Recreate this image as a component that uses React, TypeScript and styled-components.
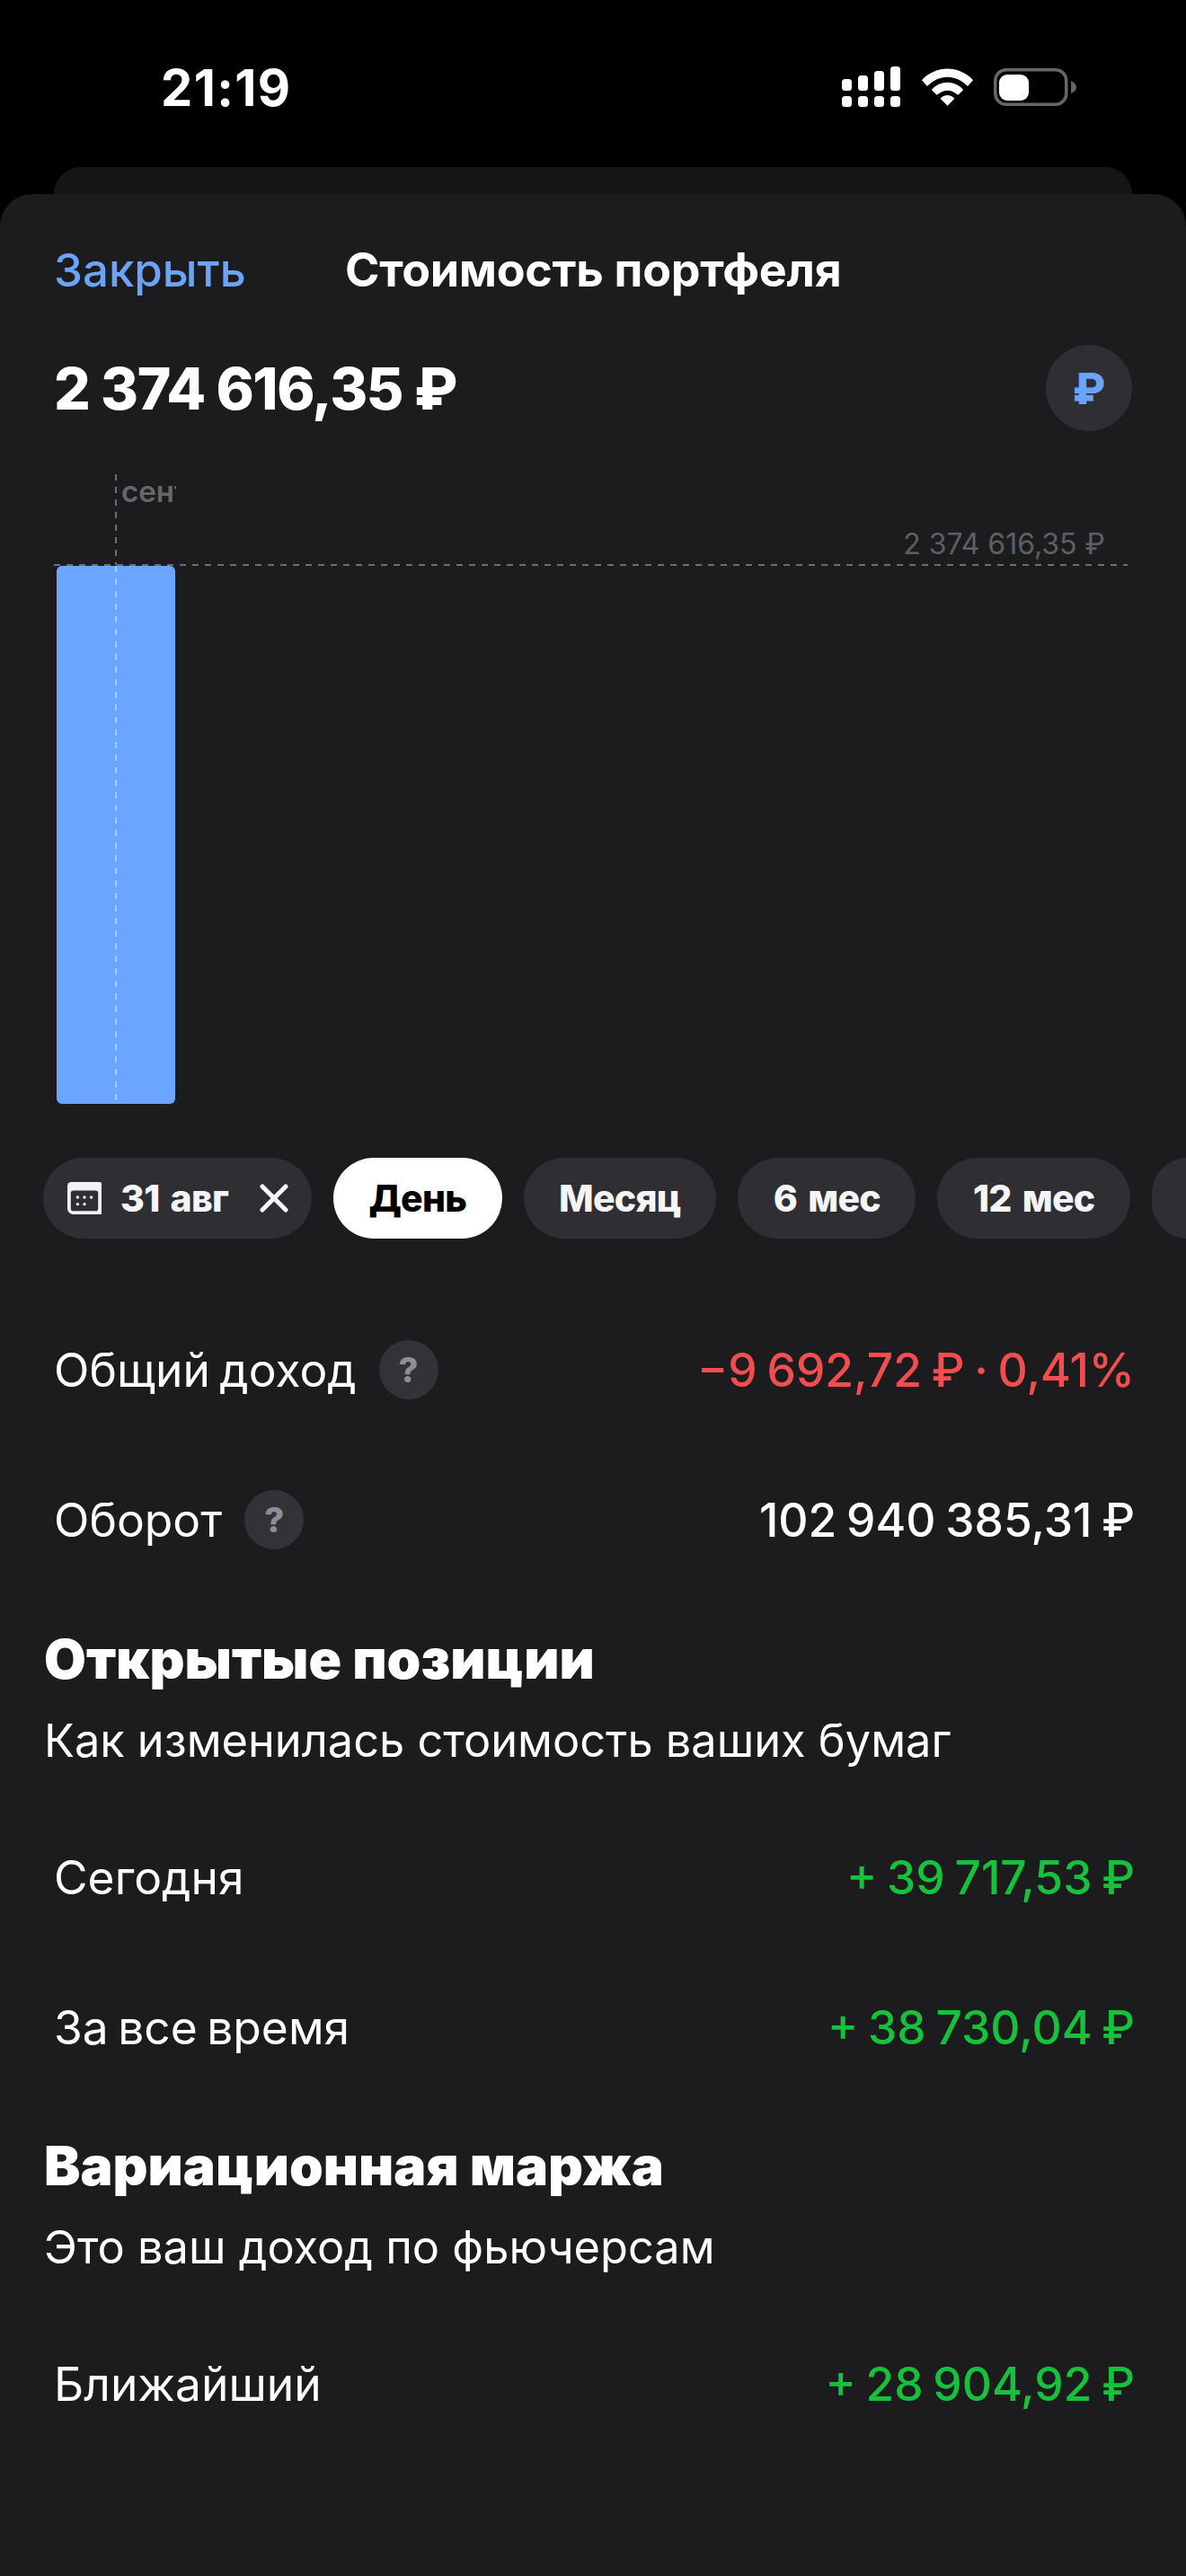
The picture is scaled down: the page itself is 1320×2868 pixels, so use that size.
import React from "react";
import styled, { createGlobalStyle } from "styled-components";

const GlobalStyle = createGlobalStyle`
	html, body {
		margin: 0;
		background: #000;
	}
	* {
		box-sizing: border-box;
	}
`;

const Screen = styled.div`
	width: 1320px;
	height: 2868px;
	overflow: hidden;
	background: #000;
	color: #fff;
	font-family: Inter, "Liberation Sans", sans-serif;
	display: flex;
	flex-direction: column;
`;

const StatusBar = styled.div`
	height: 186px;
	flex: none;
	padding: 70px 122px 0 179px;
	display: flex;
	justify-content: space-between;
	align-items: flex-start;
`;

const Time = styled.div`
	font-size: 56px;
	line-height: 56px;
	font-weight: 700;
	letter-spacing: 1.4px;
`;

const StatusIcons = styled.div`
	display: flex;
	align-items: center;
	gap: 23.5px;
	margin-top: 4px;
`;

const BackCard = styled.div`
	height: 30px;
	flex: none;
	margin: 0 60px;
	background: #161618;
	border-radius: 30px 30px 0 0;
`;

const Sheet = styled.div`
	flex: 1;
	background: #1c1c1e;
	border-radius: 36px 36px 0 0;
	padding-top: 50px;
	overflow: hidden;
`;

const Header = styled.div`
	display: flex;
	align-items: center;
	height: 68px;
	padding-left: 60px;
`;

const CloseLink = styled.span`
	color: #6ba3f8;
	font-size: 51px;
	font-weight: 500;
	width: 324px;
`;

const Title = styled.span`
	font-size: 52px;
	font-weight: 700;
	letter-spacing: -0.3px;
`;

const AmountRow = styled.div`
	display: flex;
	align-items: center;
	justify-content: space-between;
	padding: 0 60px;
	margin-top: 50px;
`;

const Amount = styled.div`
	font-size: 64px;
	font-weight: 800;
	letter-spacing: -1.4px;
`;

const CurrencyButton = styled.div`
	width: 96px;
	height: 96px;
	border-radius: 50%;
	background: #2f2f33;
	color: #6ba3f8;
	font-size: 48px;
	font-weight: 800;
	display: flex;
	align-items: center;
	justify-content: center;
`;

const ChartSvg = styled.svg`
	display: block;
	margin-top: 43px;
`;

const ChipRow = styled.div`
	display: flex;
	gap: 24px;
	padding-left: 48px;
	margin-top: 46px;
	overflow: hidden;
`;

const Chip = styled.div<{ $active?: boolean }>`
	flex: none;
	height: 90px;
	padding: 0 39.5px;
	border-radius: 45px;
	display: flex;
	align-items: center;
	font-size: 41px;
	font-weight: 800;
	letter-spacing: -0.8px;
	word-spacing: 4px;
	background: ${(props) => (props.$active ? "#fff" : "#2f2f33")};
	color: ${(props) => (props.$active ? "#000" : "#f5f5f7")};
`;

const DateChip = styled(Chip)`
	padding: 0 26px;
	gap: 20px;
`;

const ClearIcon = styled.svg`
	margin-left: 15px;
`;

const Row = styled.div`
	display: flex;
	align-items: center;
	justify-content: space-between;
	height: 167px;
	padding: 0 57px 0 60px;
	font-size: 51.5px;
`;

const RowLabel = styled.div`
	display: flex;
	align-items: center;
	gap: 25px;
	word-spacing: -4px;
`;

const RowValue = styled.div<{ $color?: string }>`
	color: ${(props) => props.$color || "#fff"};
	font-weight: 500;
	word-spacing: -3px;
`;

const Help = styled.span`
	width: 66px;
	height: 66px;
	border-radius: 50%;
	background: #333337;
	color: #8e8e93;
	font-size: 38px;
	font-weight: 800;
	display: flex;
	align-items: center;
	justify-content: center;
`;

const Rows = styled.div`
	margin-top: 62px;
`;

const Section = styled.div<{ $top: number }>`
	padding: 0 49px;
	margin-top: ${(props) => props.$top}px;
`;

const SectionTitle = styled.h2`
	margin: 0;
	font-size: 60.5px;
	line-height: 70px;
	font-weight: 900;
`;

const SectionText = styled.p`
	margin: 26px 0 0;
	font-size: 50.5px;
	line-height: 60px;
`;

const RowsTight = styled.div`
	margin-top: 38px;
`;

function Signal() {
	return (
		<svg width="65" height="46" viewBox="0 0 65 46" fill="#fff">
			<rect x="0" y="14" width="11" height="13" rx="3.5" />
			<rect x="18" y="10" width="11" height="17" rx="3.5" />
			<rect x="36" y="5" width="11" height="22" rx="3.5" />
			<rect x="54" y="0" width="11" height="27" rx="3.5" />
			<rect x="0" y="33" width="11" height="12" rx="3.5" />
			<rect x="18" y="33" width="11" height="12" rx="3.5" />
			<rect x="36" y="33" width="11" height="12" rx="3.5" />
			<rect x="54" y="33" width="11" height="12" rx="3.5" />
		</svg>
	);
}

function Wifi() {
	return (
		<svg width="57" height="42" viewBox="0 0 58 42" fill="#fff">
			<path d="M0 13 C16 -4 42 -4 58 13 L52 20 C38 6 20 6 6 20 Z" />
			<path d="M11 24 C21 13 37 13 47 24 L41 30 C33 23 25 23 17 30 Z" />
			<path d="M21 34 C25 29 33 29 37 34 L29 42 Z" />
		</svg>
	);
}

function Battery() {
	return (
		<svg width="92" height="42" viewBox="0 0 92 42">
			<rect x="1.75" y="1.75" width="79" height="38.5" rx="12" fill="none" stroke="#666" strokeWidth="3.5" />
			<rect x="6" y="7" width="33" height="29" rx="9" fill="#fff" />
			<path d="M86 14 C90 16 92 18 92 21 C92 24 90 26 86 28 Z" fill="#666" />
		</svg>
	);
}

function Calendar() {
	return (
		<svg width="40" height="38" viewBox="0 0 42 40">
			<path d="M6 1 H39 A2 2 0 0 1 41 3 V39 H8 A7 7 0 0 1 1 32 V6 A5 5 0 0 1 6 1 Z" fill="#f2f2f4" />
			<rect x="5" y="11" width="32" height="24" rx="3" fill="#2f2f33" />
			<circle cx="13" cy="19" r="1.8" fill="#f2f2f4" />
			<circle cx="21" cy="19" r="1.8" fill="#f2f2f4" />
			<circle cx="29" cy="19" r="1.8" fill="#f2f2f4" />
			<circle cx="13" cy="27" r="1.8" fill="#f2f2f4" />
			<circle cx="21" cy="27" r="1.8" fill="#f2f2f4" />
		</svg>
	);
}

function Chart() {
	return (
		<ChartSvg width="1320" height="720" viewBox="0 0 1320 720">
			<defs>
				<clipPath id="label-clip">
					<rect x="130" y="0" width="66" height="60" />
				</clipPath>
			</defs>
			<rect x="63" y="107" width="132" height="599" rx="6" fill="#6aa5ff" />
			<line x1="60" y1="106" x2="1255" y2="106" stroke="#6e6e72" strokeWidth="2" strokeDasharray="7 7" />
			<line x1="129" y1="5" x2="129" y2="106" stroke="#6e6e72" strokeWidth="2" strokeDasharray="7 7" />
			<line x1="129" y1="107" x2="129" y2="706" stroke="#a9cbff" strokeWidth="2" strokeDasharray="7 7" />
			<text x="135" y="36" fontSize="33" fontWeight="600" fill="#666669" clipPath="url(#label-clip)">
				сентябрь
			</text>
			<text x="1230" y="94" fontSize="32" fill="#5f5f62" textAnchor="end">
				2 374 616,35 ₽
			</text>
		</ChartSvg>
	);
}

export default function App() {
	return (
		<Screen>
			<GlobalStyle />
			<StatusBar>
				<Time>21:19</Time>
				<StatusIcons>
					<Signal />
					<Wifi />
					<Battery />
				</StatusIcons>
			</StatusBar>
			<BackCard />
			<Sheet>
				<Header>
					<CloseLink>Закрыть</CloseLink>
					<Title>Стоимость портфеля</Title>
				</Header>
				<AmountRow>
					<Amount>2 374 616,35 ₽</Amount>
					<CurrencyButton>₽</CurrencyButton>
				</AmountRow>
				<Chart />
				<ChipRow>
					<DateChip>
						<Calendar />
						<span>31 авг</span>
						<ClearIcon width="32" height="32" viewBox="0 0 32 32">
							<path d="M3 3 L29 29 M29 3 L3 29" stroke="#f5f5f7" strokeWidth="5" strokeLinecap="round" />
						</ClearIcon>
					</DateChip>
					<Chip $active>День</Chip>
					<Chip>Месяц</Chip>
					<Chip>6 мес</Chip>
					<Chip>12 мес</Chip>
					<Chip />
				</ChipRow>
				<Rows>
					<Row>
						<RowLabel>
							Общий доход
							<Help>?</Help>
						</RowLabel>
						<RowValue $color="#f24e50">−9 692,72 ₽ · 0,41%</RowValue>
					</Row>
					<Row>
						<RowLabel>
							Оборот
							<Help>?</Help>
						</RowLabel>
						<RowValue>102 940 385,31 ₽</RowValue>
					</Row>
				</Rows>
				<Section $top={37}>
					<SectionTitle>Открытые позиции</SectionTitle>
					<SectionText>Как изменилась стоимость ваших бумаг</SectionText>
				</Section>
				<RowsTight>
					<Row>
						<RowLabel>Сегодня</RowLabel>
						<RowValue $color="#16c23c">+ 39 717,53 ₽</RowValue>
					</Row>
					<Row>
						<RowLabel>За все время</RowLabel>
						<RowValue $color="#16c23c">+ 38 730,04 ₽</RowValue>
					</Row>
				</RowsTight>
				<Section $top={36}>
					<SectionTitle>Вариационная маржа</SectionTitle>
					<SectionText>Это ваш доход по фьючерсам</SectionText>
				</Section>
				<RowsTight>
					<Row>
						<RowLabel>Ближайший</RowLabel>
						<RowValue $color="#16c23c">+ 28 904,92 ₽</RowValue>
					</Row>
				</RowsTight>
			</Sheet>
		</Screen>
	);
}
